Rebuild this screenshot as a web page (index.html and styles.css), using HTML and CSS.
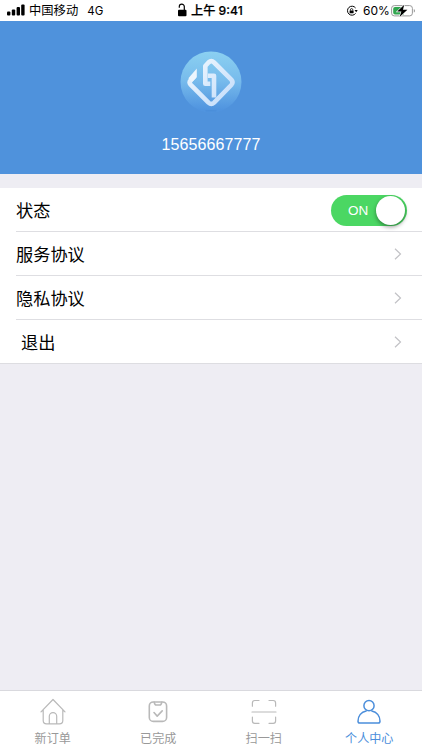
FILE: index.html
```html
<!DOCTYPE html>
<html lang="zh-CN">
<head>
<meta charset="utf-8">
<title>个人中心</title>
<link rel="stylesheet" href="styles.css">
</head>
<body>
<div class="app">
  <header class="status">
    <div class="status-left">
      <svg class="signal" width="19" height="12" viewBox="0 0 19 12"><rect x="0" y="7.5" width="3.4" height="4" rx="1"/><rect x="4.8" y="5.6" width="3.4" height="5.9" rx="1"/><rect x="9.6" y="3" width="3.4" height="8.5" rx="1"/><rect x="14.2" y="0.4" width="3.4" height="11.1" rx="1"/></svg>
      <span class="carrier">中国移动</span><span class="network">4G</span>
    </div>
    <div class="status-center">
      <svg width="10" height="14" viewBox="0 0 10 14"><rect x="1" y="6.8" width="8.5" height="6.4" rx="1"/><path d="M2.3 4.8V3.6a2.5 2.5 0 0 1 5 0V7" fill="none" stroke="#000" stroke-width="1.2"/></svg>
      <span class="time">上午 9:41</span>
    </div>
    <div class="status-right">
      <svg class="rotation" width="12" height="12" viewBox="0 0 12 12"><path d="M9.6 3A4.5 4.5 0 1 0 9.6 8.4" fill="none" stroke="#000" stroke-width="1"/><path d="M8.5 5h3.2l-1.5 2.2z"/><rect x="3.6" y="5.4" width="4" height="2.8" rx=".4"/><path d="M4.4 5.6v-.8a1.2 1.2 0 0 1 2.4 0v.8" fill="none" stroke="#000" stroke-width=".8"/></svg>
      <span class="percent">60%</span>
      <svg class="battery" width="25" height="14" viewBox="0 0 25 14"><rect x=".6" y="1.6" width="20.8" height="10.3" rx="2.7" fill="#fff" stroke="#999" stroke-width="1"/><path d="M4 3h9v7.6H4a1.8 1.8 0 0 1-1.8-1.8v-4A1.8 1.8 0 0 1 4 3z" fill="#31a64f"/><path d="M22.8 5v3.6c1.6-.5 1.6-3.1 0-3.6z" fill="#999"/><path d="M13.3.8L6.2 7.6h4.2L8.6 13l7.8-7.2h-4.5z" stroke="#fff" stroke-width="1.2" paint-order="stroke"/></svg>
    </div>
  </header>
  <section class="profile">
    <svg class="avatar" width="62" height="62" viewBox="0 0 62 62">
      <defs>
        <linearGradient id="disc" x1="0" y1="0" x2="0" y2="1"><stop offset="0" stop-color="#8bd0f1"/><stop offset=".48" stop-color="#77bbec"/><stop offset=".95" stop-color="#5094df"/></linearGradient>
        <linearGradient id="mark" gradientUnits="userSpaceOnUse" x1="10" y1="10" x2="52" y2="52"><stop offset="0" stop-color="#f0f8fe"/><stop offset="1" stop-color="#c3dcfa"/></linearGradient>
      </defs>
      <circle cx="31" cy="31" r="30.5" fill="url(#disc)"/>
      <g fill="none" stroke="url(#mark)" stroke-width="4.6" stroke-linejoin="round">
        <path d="M14.5 25.2L10.6 29.4Q8.7 31.5 10.6 33.6L28.5 51.6Q31.3 54.2 34.1 51.6L51.3 34Q53.8 31.3 51.3 28.6L34.1 11.5Q31.3 8.9 28.5 11.5L25.3 15V32.7H30.3"/>
        <path d="M27.8 24.8H34V46.5"/>
      </g>
      <path d="M16.8 17.5V26.2L12.3 30.7 8.4 27.2Z" fill="#edf6fd"/>
      <ellipse cx="31" cy="59.8" rx="6" ry=".5" fill="#3d82cf" opacity=".45"/>
    </svg>
    <div class="phone">15656667777</div>
  </section>
  <main class="list">
    <div class="row">
      <span>状态</span>
      <div class="switch"><span class="switch-text">ON</span><i class="knob"></i></div>
    </div>
    <div class="row"><span>服务协议</span><svg class="chevron" width="8" height="12" viewBox="0 0 8 12"><path d="M1 .7L6.5 6 1 11.3"/></svg></div>
    <div class="row"><span>隐私协议</span><svg class="chevron" width="8" height="12" viewBox="0 0 8 12"><path d="M1 .7L6.5 6 1 11.3"/></svg></div>
    <div class="row"><span class="logout">退出</span><svg class="chevron" width="8" height="12" viewBox="0 0 8 12"><path d="M1 .7L6.5 6 1 11.3"/></svg></div>
  </main>
  <nav class="tabs">
    <div class="tab"><svg width="28" height="28" viewBox="0 0 28 28"><path d="M2 14.8L14 2.5 26 14.8M4.2 12.8V23.5Q4.2 26.8 7.5 26.8H20.5Q23.8 26.8 23.8 23.5V12.8M10.3 26.8V19.3a3.7 3.7 0 0 1 7.4 0v7.5"/></svg><span>新订单</span></div>
    <div class="tab"><svg width="28" height="28" viewBox="0 0 28 28"><rect class="bold" x="5.3" y="5" width="17.3" height="19.4" rx="4"/><path class="bold" d="M10.3 5.3Q10.7 8 12.3 8H15.7Q17.3 8 17.7 5.3M10 15.5l3.2 3.6 5-5.2"/></svg><span>已完成</span></div>
    <div class="tab"><svg width="28" height="28" viewBox="0 0 28 28"><path d="M2.4 9.2V5.9Q2.4 3.5 4.8 3.5H9M19 3.5h4.2q2.4 0 2.4 2.4v3.3M2.4 20v4Q2.4 26.3 4.8 26.3H9M19 26.3h4.2q2.4 0 2.4-2.3v-4M2 15h24"/></svg><span>扫一扫</span></div>
    <div class="tab active"><svg width="28" height="28" viewBox="0 0 28 28"><circle cx="14" cy="8.7" r="5.1"/><path d="M11.2 14C6.3 15 3 19 3 24.3Q3 26.1 4.8 26.1H23.2Q25 26.1 25 24.3C25 19 21.7 15 16.8 14"/></svg><span>个人中心</span></div>
  </nav>
</div>
</body>
</html>
```
FILE: styles.css
```css
* { box-sizing: border-box; }
body {
  margin: 0;
  background: #eeedf3;
  color: #000;
  font-family: "Liberation Sans", "Noto Sans CJK SC", sans-serif;
}
svg { display: block; flex-shrink: 0; }
.app { width: 422px; height: 750px; display: flex; flex-direction: column; overflow: hidden; }
.status {
  height: 21px;
  background: #fff;
  display: grid;
  grid-template-columns: 177px 1fr 76px;
  font-size: 12px;
  line-height: 20px;
  white-space: nowrap;
}
.status > div { display: flex; align-items: center; height: 21px; }
.status span { padding-top: 1px; }
.status-left { padding-left: 7px; }
.signal { margin-top: -1px; }
.carrier { margin-left: 3px; font-size: 12.3px; }
.network { margin-left: 9px; font-family: Inter, sans-serif; font-size: 11.5px; }
.status-center svg { margin-top: -2px; }
.time { margin-left: 4px; font-family: Inter, "Noto Sans CJK SC", sans-serif; font-weight: 500; font-size: 12.2px; -webkit-text-stroke: .2px #000; }
.rotation { margin-top: 1px; }
.percent { margin-left: 5px; font-family: Inter, sans-serif; font-size: 12px; width: 27px; }
.battery { margin-left: 1px; }
.profile {
  height: 153px;
  padding-top: 30px;
  background: #4f92dc;
  color: #fff;
  display: flex;
  flex-direction: column;
  align-items: center;
}
.phone { margin-top: 22px; font-size: 16px; line-height: 20px; letter-spacing: .1px; }
.list { margin-top: 14px; background: #fff; border-bottom: 1px solid #dddde1; }
.row {
  height: 44px;
  margin-left: 16px;
  padding-right: 20px;
  display: flex;
  align-items: center;
  justify-content: space-between;
  border-bottom: 1px solid #dedee2;
  font-size: 17.2px;
  line-height: 24px;
}
.row > span { padding-top: 2px; }
.row:first-child { padding-right: 15px; }
.row:last-child { height: 43px; border-bottom: 0; }
.logout { margin-left: 5px; }
.chevron { fill: none; stroke: #c2c2c6; stroke-width: 1.2; }
.switch {
  width: 76px;
  height: 31px;
  margin-top: 1px;
  padding: 0 2px 0 17px;
  border-radius: 16px;
  background: #4bd763;
  display: flex;
  align-items: center;
  justify-content: space-between;
}
.switch-text { padding-top: 2px; color: #fff; font-size: 13.5px; line-height: 16px; }
.knob { width: 29px; height: 29px; border-radius: 50%; background: #fff; box-shadow: 0 2px 4px rgba(0,0,0,.4); }
.tabs {
  height: 60px;
  margin-top: auto;
  background: #fff;
  border-top: 1px solid #d9d9de;
  display: grid;
  grid-template-columns: repeat(4, 1fr);
}
.tab { display: flex; flex-direction: column; align-items: center; padding-top: 6px; color: #999; font-size: 12.1px; line-height: 18px; }
.tab svg { fill: none; stroke: #b9b9b9; stroke-width: 1.2; stroke-linecap: round; stroke-linejoin: round; }
.tab .bold { stroke-width: 1.6; }
.tab span { margin-top: 5px; }
.tab.active { color: #4b8edb; }
.tab.active svg { stroke: #4b8edb; stroke-width: 1.5; }
```
